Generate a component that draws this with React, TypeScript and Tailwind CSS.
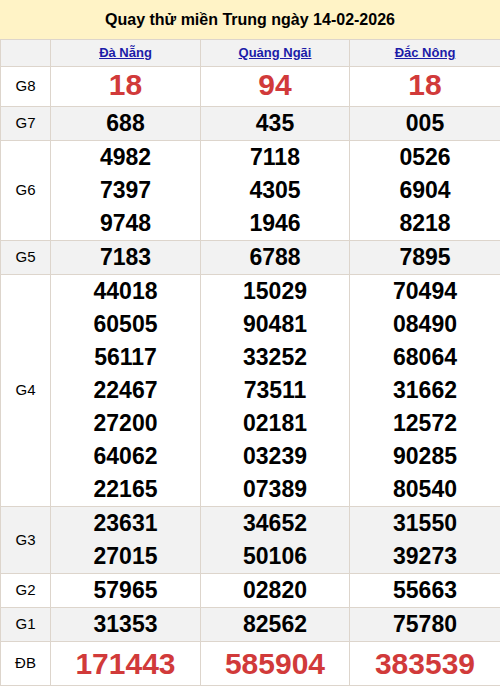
import React from "react";

type Row = { label: string; values: string[][]; big?: boolean; gray?: boolean; lh: string };

const provinces = ["Đà Nẵng", "Quảng Ngãi", "Đắc Nông"];

const rows: Row[] = [
    { label: "G8", values: [["18"], ["94"], ["18"]], big: true, lh: "leading-[35px] pb-[4px]" },
    { label: "G7", values: [["688"], ["435"], ["005"]], gray: true, lh: "leading-[33px]" },
    {
        label: "G6",
        values: [
            ["4982", "7397", "9748"],
            ["7118", "4305", "1946"],
            ["0526", "6904", "8218"],
        ],
        lh: "leading-[33px]",
    },
    { label: "G5", values: [["7183"], ["6788"], ["7895"]], gray: true, lh: "leading-[33px]" },
    {
        label: "G4",
        values: [
            ["44018", "60505", "56117", "22467", "27200", "64062", "22165"],
            ["15029", "90481", "33252", "73511", "02181", "03239", "07389"],
            ["70494", "08490", "68064", "31662", "12572", "90285", "80540"],
        ],
        lh: "leading-[33px]",
    },
    {
        label: "G3",
        values: [
            ["23631", "27015"],
            ["34652", "50106"],
            ["31550", "39273"],
        ],
        gray: true,
        lh: "leading-[33px]",
    },
    { label: "G2", values: [["57965"], ["02820"], ["55663"]], lh: "leading-[33px]" },
    { label: "G1", values: [["31353"], ["82562"], ["75780"]], gray: true, lh: "leading-[33px]" },
    { label: "ĐB", values: [["171443"], ["585904"], ["383539"]], big: true, lh: "leading-[43px]" },
];

export default function App() {
    return (
        <div className="w-[500px] bg-white font-['Liberation_Sans',Arial,sans-serif] text-black">
            <div className="h-[39px] bg-[#fff3c6] flex items-center justify-center text-[16px] font-bold">
                Quay thử miền Trung ngày 14-02-2026
            </div>
            <table className="w-[500px] border-collapse table-fixed">
                <colgroup>
                    <col className="w-[50px]" />
                    <col className="w-[150px]" />
                    <col className="w-[149px]" />
                    <col className="w-[151px]" />
                </colgroup>
                <thead>
                    <tr className="bg-[#f2f2f2]">
                        <th className="border border-[#ddd5cc] p-0"></th>
                        {provinces.map((p) => (
                            <th key={p} className="border border-[#ddd5cc] p-0 leading-[26px] text-[13px] font-bold">
                                <a href="#" className="text-[#1c1ca8] underline">
                                    {p}
                                </a>
                            </th>
                        ))}
                    </tr>
                </thead>
                <tbody>
                    {rows.map((r) => (
                        <tr key={r.label} className={r.gray ? "bg-[#f2f2f2]" : "bg-white"}>
                            <td className="border border-[#ddd5cc] p-0 text-center text-[15px]">{r.label}</td>
                            {r.values.map((col, i) => (
                                <td key={i} className="border border-[#ddd5cc] p-0 text-center align-middle">
                                    {col.map((v, j) => (
                                        <div
                                            key={j}
                                            className={`${r.lh} font-bold ${
                                                r.big ? "text-[30px] text-[#d13a3a]" : "text-[23px]"
                                            }`}
                                        >
                                            {v}
                                        </div>
                                    ))}
                                </td>
                            ))}
                        </tr>
                    ))}
                </tbody>
            </table>
        </div>
    );
}
